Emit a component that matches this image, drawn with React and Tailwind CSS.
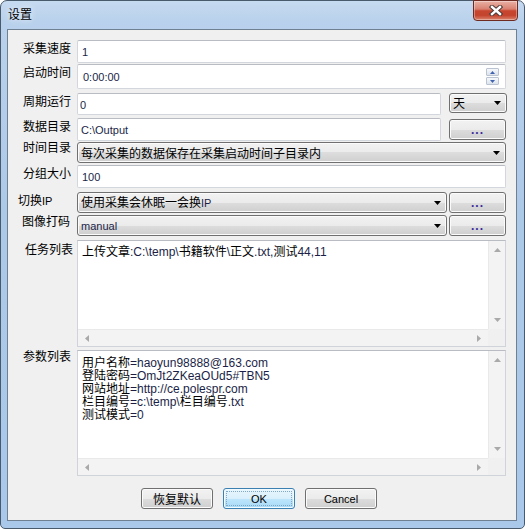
import React from 'react'

const CJK = /[\u2E80-\u9FFF\uF900-\uFAFF\uFE30-\uFE4F\uFF00-\uFFEF]/
const SPLIT = /([\u2E80-\u9FFF\uF900-\uFAFF\uFE30-\uFE4F\uFF00-\uFFEF]+)/

// Chinese runs at 12px, latin runs in a smaller Arial-width font
function Txt({ s, latin = "font-['Liberation_Sans',sans-serif] text-[11px] text-[#1b1f48]" }) {
  return s
    .split(SPLIT)
    .filter(Boolean)
    .map((p, i) =>
      CJK.test(p) ? (
        <span key={i}>{p}</span>
      ) : (
        <span key={i} className={latin}>
          {p}
        </span>
      )
    )
}

function Down({ className = 'fill-black' }) {
  return (
    <svg width="7" height="4" viewBox="0 0 7 4" className={className}>
      <path d="M0 0h7L3.5 4z" />
    </svg>
  )
}

function Tri({ dir }) {
  const d = {
    up: 'M0 4h7L3.5 0z',
    down: 'M0 0h7L3.5 4z',
    left: 'M4 0v7L0 3.5z',
    right: 'M0 0v7L4 3.5z',
  }[dir]
  const vertical = dir === 'up' || dir === 'down'
  return (
    <svg
      width={vertical ? 7 : 4}
      height={vertical ? 4 : 7}
      viewBox={vertical ? '0 0 7 4' : '0 0 4 7'}
      className="fill-[#a9a9a9]"
    >
      <path d={d} />
    </svg>
  )
}

function TextBox({ value, className = '', pad = 'pl-[3px]', children }) {
  return (
    <div
      className={`flex items-center bg-white border border-[#d3d6dc] border-t-[#b9bcc2] rounded-[2px] ${pad} ${className}`}
    >
      <div className="flex-1 leading-[16px] whitespace-nowrap">
        <Txt s={value} />
      </div>
      {children}
    </div>
  )
}

function Combo({ text, className = '' }) {
  return (
    <div
      className={`flex items-center rounded-[3px] border border-[#707070] bg-[linear-gradient(#f2f2f2,#ebebeb_50%,#dddddd_50%,#cfcfcf)] shadow-[inset_0_0_0_1px_#fbfbfb] pl-[3px] pr-[5px] ${className}`}
    >
      <div className="flex-1 leading-[16px] whitespace-nowrap overflow-hidden">
        <Txt s={text} />
      </div>
      <Down />
    </div>
  )
}

function Dots({ className = '' }) {
  return (
    <div
      className={`w-[57px] h-[21px] shrink-0 flex items-center justify-center rounded-[3px] border border-[#707070] bg-[linear-gradient(#f2f2f2,#ebebeb_50%,#dddddd_50%,#cfcfcf)] shadow-[inset_0_0_0_1px_#fbfbfb] font-['Liberation_Sans',sans-serif] text-[12px] font-bold tracking-[1px] text-[#3a2a9e] ${className}`}
    >
      ...
    </div>
  )
}

function Btn({ children, isDefault }) {
  if (isDefault) {
    return (
      <div className="w-[72px] h-[21px] rounded-[3px] border border-[#3c7fb1] bg-[linear-gradient(#eaf6fd,#d9f0fc_50%,#bee6fd_50%,#a7d9f5)] shadow-[inset_0_0_0_1px_#f2fbff] p-[2px]">
        <div className="h-full flex items-center justify-center border border-dotted border-[#7fa8c8]">
          {children}
        </div>
      </div>
    )
  }
  return (
    <div className="w-[72px] h-[21px] flex items-center justify-center rounded-[3px] border border-[#707070] bg-[linear-gradient(#f2f2f2,#ebebeb_50%,#dddddd_50%,#cfcfcf)] shadow-[inset_0_0_0_1px_#fbfbfb]">
      {children}
    </div>
  )
}

function ListBox({ className, pad, lines }) {
  return (
    <div className={`flex-1 flex flex-col bg-white border border-[#d0d3d9] border-t-[#b9bcc2] ${className}`}>
      <div className="flex flex-1 min-h-0">
        <div className={`flex-1 pl-[4px] whitespace-nowrap ${pad}`}>
          {lines.map((l) => (
            <div key={l} className="h-[13px] leading-[13px]">
              <Txt s={l} latin="font-['Liberation_Sans',sans-serif] text-[12px] text-[#1b1f48]" />
            </div>
          ))}
        </div>
        <div className="w-[17px] flex flex-col justify-between items-center bg-[#f3f3f3] border-l border-[#e9e9e9] py-[7px]">
          <Tri dir="up" />
          <Tri dir="down" />
        </div>
      </div>
      <div className="flex h-[17px]">
        <div className="flex-1 flex items-center justify-between bg-[#f3f3f3] border-t border-[#e9e9e9] px-[7px]">
          <Tri dir="left" />
          <Tri dir="right" />
        </div>
        <div className="w-[17px] bg-[#f0f0f0]" />
      </div>
    </div>
  )
}

function Row({ label, mt, lab = 'pl-[15px]', children }) {
  return (
    <div className={`flex items-start ${mt}`}>
      <div className={`w-[69px] h-[16px] shrink-0 leading-[16px] whitespace-nowrap ${lab}`}>
        <Txt s={label} latin="font-['Liberation_Sans',sans-serif] text-[11px]" />
      </div>
      <div className="flex-1 flex items-start mr-[10px]">{children}</div>
    </div>
  )
}

export default function App() {
  return (
    <div className="w-[525px] h-[529px] bg-white font-['Noto_Sans_CJK_SC',sans-serif] text-[12px] text-black">
      <div className="w-full h-full flex flex-col rounded-t-[7px] rounded-b-[5px] border border-[#4a5a6d] bg-[linear-gradient(180deg,#c6daf0_0%,#b9d1ec_4%,#adc9e8_40%,#a9c8ea_100%)]">
        {/* title bar */}
        <div className="h-[28px] flex items-start justify-between">
          <div className="pl-[7px] pt-[5px] leading-[16px] [text-shadow:0_0_6px_rgba(255,255,255,0.95)]">设置</div>
          <div className="-mt-[1px] mr-[6px] w-[45px] h-[21px] flex items-center justify-center rounded-b-[4px] border border-[#6e2a20] bg-[linear-gradient(#eab2a6,#d98171_42%,#c7452f_52%,#c4432c_75%,#d9836f)] shadow-[inset_0_0_0_1px_rgba(255,255,255,0.35)]">
            <svg width="14" height="11" viewBox="0 0 14 11">
              <path d="M3 2L11 9M11 2L3 9" stroke="#4b3a36" strokeWidth="4.4" strokeLinecap="square" />
              <path d="M3 2L11 9M11 2L3 9" stroke="#ffffff" strokeWidth="2.4" strokeLinecap="square" />
            </svg>
          </div>
        </div>

        {/* client area */}
        <div className="flex-1 ml-[6px] mr-[7px] mb-[7px] border border-[#6f8093] bg-[#f0f0f0] flex flex-col">
          <Row label="采集速度" mt="mt-[10px]">
            <TextBox value="1" className="flex-1 h-[23px]" pad="pl-[4px]" />
          </Row>
          <Row label="启动时间" mt="mt-[1px]">
            <TextBox value="0:00:00" className="flex-1 h-[25px]" pad="pl-[5px]">
              <div className="flex flex-col gap-[1px] mr-[6px]">
                <div className="w-[13px] h-[8px] flex items-center justify-center rounded-[1px] border border-[#b9c3d1] bg-[linear-gradient(#f6f8fb,#dde3eb)]">
                  <svg width="5" height="3" viewBox="0 0 5 3" className="fill-[#3f63b0]">
                    <path d="M0 3h5L2.5 0z" />
                  </svg>
                </div>
                <div className="w-[13px] h-[8px] flex items-center justify-center rounded-[1px] border border-[#b9c3d1] bg-[linear-gradient(#f6f8fb,#dde3eb)]">
                  <svg width="5" height="3" viewBox="0 0 5 3" className="fill-[#3f63b0]">
                    <path d="M0 0h5L2.5 3z" />
                  </svg>
                </div>
              </div>
            </TextBox>
          </Row>
          <Row label="周期运行" mt="mt-[4px]">
            <TextBox value="0" className="w-[364px] h-[22px]" pad="pl-[2px]" />
            <Combo text="天" className="ml-[8px] w-[58px] h-[20px] pl-[1px]" />
          </Row>
          <Row label="数据目录" mt="mt-[3px]">
            <TextBox value="C:\Output" className="w-[364px] h-[23px]" />
            <Dots className="ml-[8px] mt-[1px]" />
          </Row>
          <Row label="时间目录" mt="mt-[1px]" lab="pl-[15px] -mt-[3px]">
            <Combo text="每次采集的数据保存在采集启动时间子目录内" className="flex-1 h-[21px]" />
          </Row>
          <Row label="分组大小" mt="mt-[2px]">
            <TextBox value="100" className="flex-1 h-[23px]" pad="pl-[4px]" />
          </Row>
          <Row label="切换IP" mt="mt-[4px]" lab="pl-[10px]">
            <Combo text="使用采集会休眠一会换IP" className="w-[370px] h-[21px]" />
            <Dots className="ml-[2px]" />
          </Row>
          <Row label="图像打码" mt="mt-[2px]" lab="pl-[14px] -mt-[2px]">
            <Combo text="manual" className="w-[370px] h-[21px]" />
            <Dots className="ml-[2px]" />
          </Row>
          <Row label="任务列表" mt="mt-[4px]" lab="pl-[17px] mt-[1px]">
            <ListBox className="h-[107px]" pad="pt-[3px]" lines={['上传文章:C:\\temp\\书籍软件\\正文.txt,测试44,11']} />
          </Row>
          <Row label="参数列表" mt="mt-[3px]" lab="pl-[15px] -mt-[2px]">
            <ListBox
              className="h-[126px]"
              pad="pt-[4px]"
              lines={[
                '用户名称=haoyun98888@163.com',
                '登陆密码=OmJt2ZKeaOUd5#TBN5',
                '网站地址=http://ce.polespr.com',
                '栏目编号=c:\\temp\\栏目编号.txt',
                '测试模式=0',
              ]}
            />
          </Row>
          <div className="mt-[12px] pl-[133px] flex gap-[10px] leading-[16px]">
            <Btn>恢复默认</Btn>
            <Btn isDefault>
              <span className="font-['Liberation_Sans',sans-serif] text-[11px]">OK</span>
            </Btn>
            <Btn>
              <span className="font-['Liberation_Sans',sans-serif] text-[11px]">Cancel</span>
            </Btn>
          </div>
        </div>
      </div>
    </div>
  )
}
